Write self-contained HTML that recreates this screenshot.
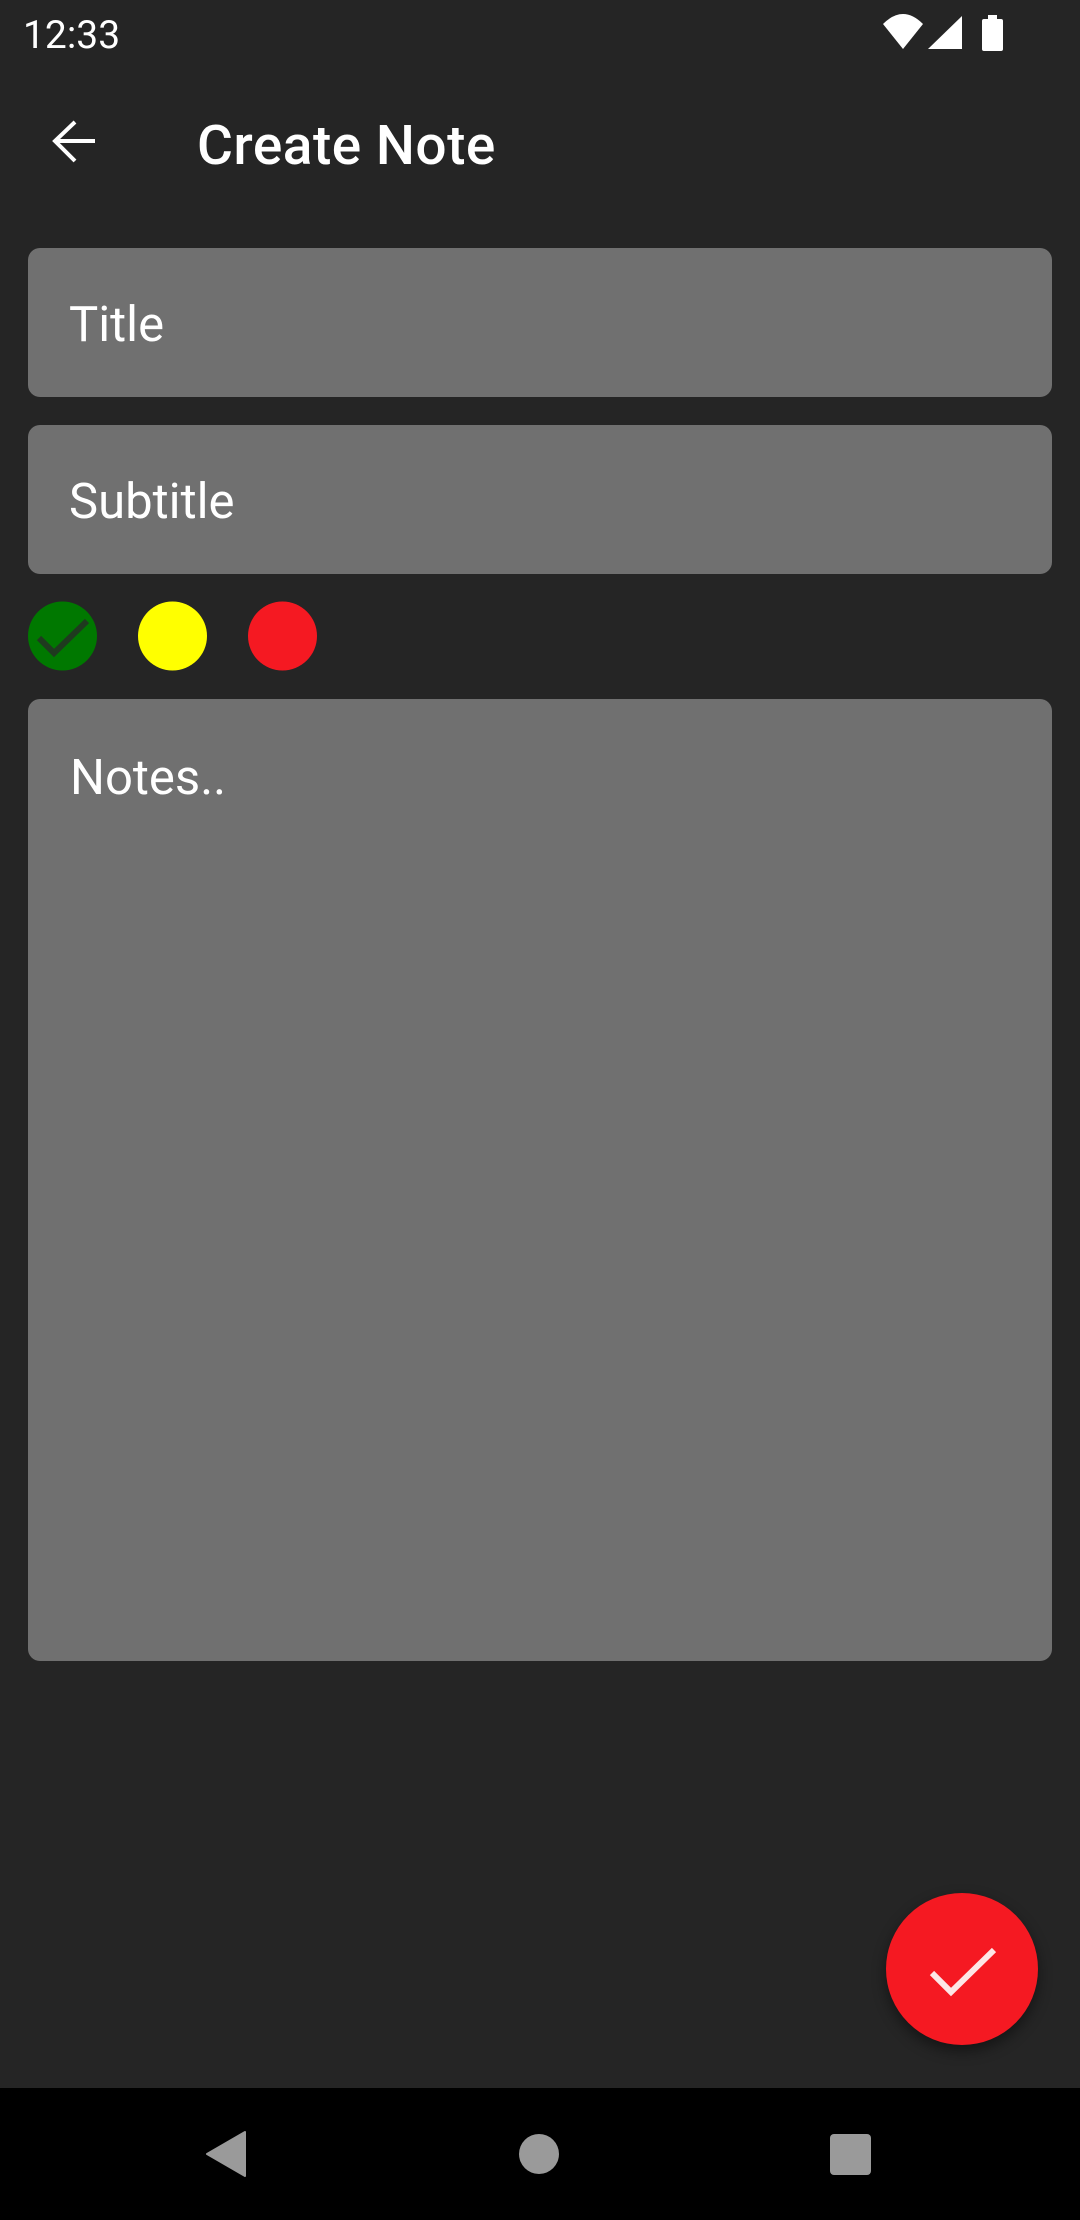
<!DOCTYPE html>
<html><head><meta charset="utf-8"><style>
*{margin:0;padding:0;box-sizing:border-box}
body{width:1080px;height:2220px;background:#252525;position:relative;overflow:hidden;font-family:"Roboto","Liberation Sans",sans-serif;color:#fff}
.t{position:absolute;white-space:nowrap}
.box{position:absolute;left:28px;width:1024px;background:#707070;border-radius:12px}
</style></head><body>
<div class="t" style="left:23px;top:11px;font-size:39px;line-height:48px">12:33</div>
<svg style="position:absolute;left:880px;top:12px" width="130" height="42" viewBox="880 12 130 42">
<path d="M883 24 Q903 4 923 24 L903 49 Z" fill="#fff"/>
<path d="M928 49 L962 16 L962 49 Z" fill="#fff"/>
<rect x="982" y="19" width="21" height="32" rx="2" fill="#fff"/>
<rect x="988" y="15" width="9" height="5" fill="#fff"/>
</svg>
<svg style="position:absolute;left:50px;top:118px" width="48" height="48" viewBox="50 118 48 48">
<path d="M95 141 H56 M75 122 L55 141 L75 161" stroke="#fff" stroke-width="4" fill="none"/>
</svg>
<div class="t" style="left:197px;top:114px;font-size:55px;line-height:64px;font-weight:500;letter-spacing:0.5px">Create Note</div>
<div class="box" style="top:248px;height:149px"></div>
<div class="t" style="left:69px;top:295px;font-size:49px;line-height:60px">Title</div>
<div class="box" style="top:425px;height:149px"></div>
<div class="t" style="left:69px;top:472px;font-size:49px;line-height:60px">Subtitle</div>
<svg style="position:absolute;left:0;top:590px" width="330" height="95" viewBox="0 590 330 95">
<circle cx="62.5" cy="636" r="34.5" fill="#007800"/>
<path d="M39 638 L54 653 L87 621" stroke="#1f3a1f" stroke-width="6" fill="none"/>
<circle cx="172.5" cy="636" r="34.5" fill="#ffff00"/>
<circle cx="282.5" cy="636" r="34.5" fill="#f51922"/>
</svg>
<div class="box" style="top:699px;height:962px"></div>
<div class="t" style="left:70px;top:748px;font-size:49px;line-height:60px">Notes..</div>
<div style="position:absolute;left:886px;top:1893px;width:152px;height:152px;border-radius:50%;background:#f51922;box-shadow:0 6px 14px rgba(0,0,0,.45)"></div>
<svg style="position:absolute;left:920px;top:1940px" width="90" height="70" viewBox="920 1940 90 70">
<path d="M932 1973 L951 1992 L994 1950" stroke="#fde6e6" stroke-width="6" fill="none"/>
</svg>
<div style="position:absolute;left:0;top:2088px;width:1080px;height:132px;background:#000"></div>
<svg style="position:absolute;left:0;top:2088px" width="1080" height="132" viewBox="0 2088 1080 132">
<path d="M245 2132 L245 2176 L207 2154 Z" fill="#9a9a9a" stroke="#9a9a9a" stroke-width="2" stroke-linejoin="round"/>
<circle cx="539" cy="2154" r="20" fill="#9a9a9a"/>
<rect x="830" y="2134" width="41" height="41" rx="4" fill="#9a9a9a"/>
</svg>
</body></html>
